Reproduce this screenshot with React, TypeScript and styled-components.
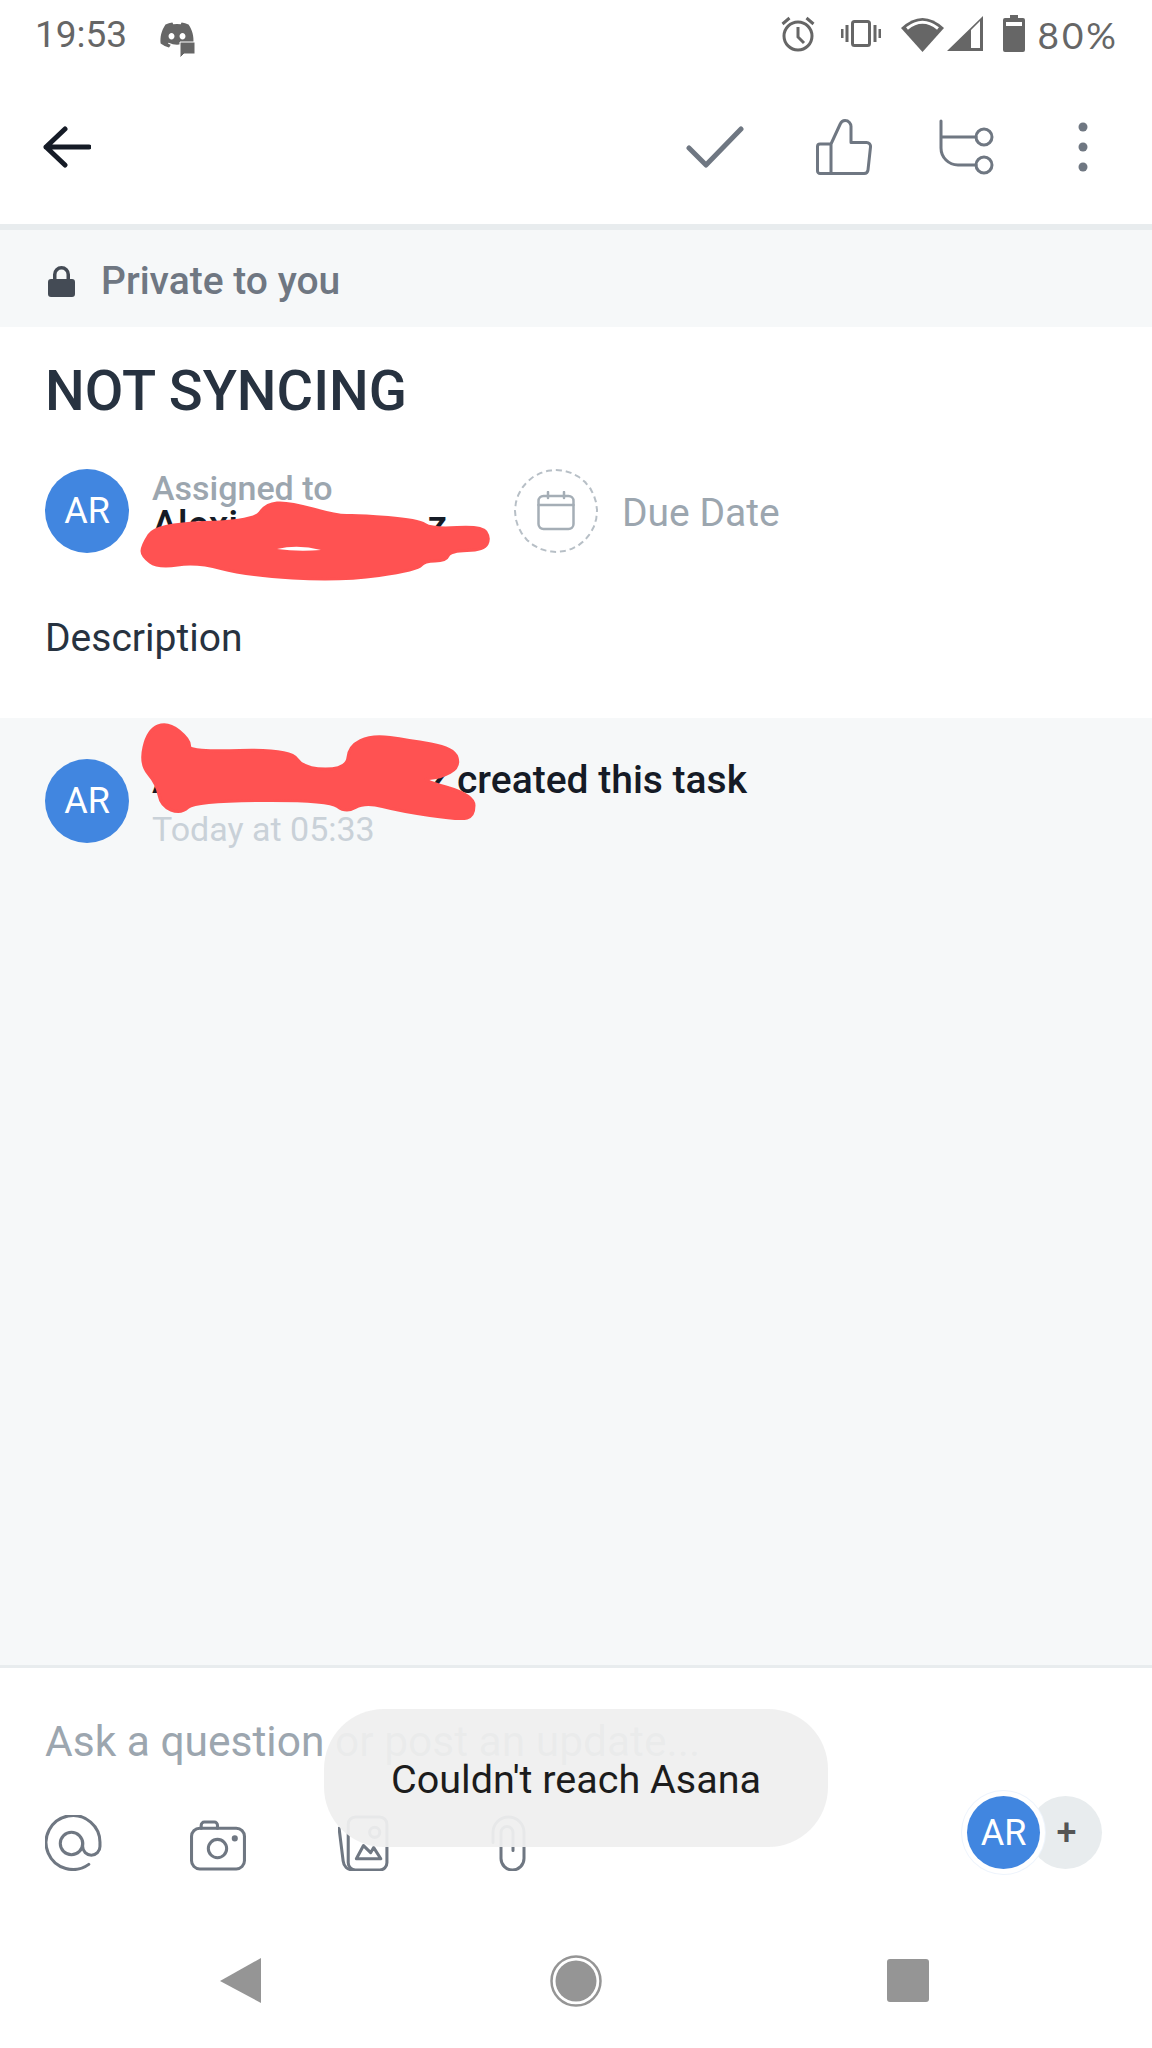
import styled, { createGlobalStyle } from "styled-components";
import { FaDiscord } from "react-icons/fa";

const GlobalStyle = createGlobalStyle`
  html, body {
    margin: 0;
    padding: 0;
    background: #fff;
    font-family: Roboto, "Liberation Sans", sans-serif;
  }
`;

const Page = styled.div`
  position: relative;
  display: flex;
  flex-direction: column;
  width: 1152px;
  height: 2048px;
  overflow: hidden;
  background: #fff;
`;

const StatusBar = styled.div`
  display: flex;
  align-items: center;
  justify-content: space-between;
  height: 70px;
  padding: 0 33px 0 35px;
  color: #666;
`;

const StatusSide = styled.div`
  display: flex;
  align-items: center;
`;

const IconCluster = styled.div`
  display: flex;
  align-items: center;
  margin-bottom: 3px;
`;

const Clock = styled.span`
  font-size: 37px;
  line-height: 70px;
`;

const AppNotice = styled.span`
  position: relative;
  display: flex;
  margin-left: 32px;
  font-size: 36px;
  color: #666;
`;

const NoticeBubble = styled.svg`
  position: absolute;
  right: -1px;
  bottom: -5px;
  width: 17px;
  height: 17px;
`;

const Glyph = styled.svg<{ $gap?: number }>`
  display: block;
  flex: none;
  margin-left: ${(p) => p.$gap ?? 0}px;
`;

const BatteryLevel = styled.span`
  margin-left: 12px;
  font-family: Lato, sans-serif;
  font-size: 37px;
  letter-spacing: 3px;
  line-height: 70px;
`;

const Toolbar = styled.div`
  display: flex;
  align-items: center;
  height: 154px;
  padding: 0 64px 0 43px;
`;

const ToolGroup = styled.div`
  display: flex;
  align-items: center;
  margin-left: auto;
`;

const PrivateBanner = styled.div`
  display: flex;
  align-items: center;
  gap: 26px;
  height: 103px;
  padding: 5px 0 0 48px;
  box-sizing: border-box;
  border-top: 6px solid #e8ecee;
  background: #f6f8f9;
  color: #6f7782;
  font-size: 39px;
  font-weight: 500;
`;

const Details = styled.section`
  display: flex;
  flex-direction: column;
  padding: 34px 45px 57px;
`;

const Title = styled.h1`
  margin: 0;
  color: #273240;
  font-size: 56px;
  font-weight: 500;
  line-height: 60px;
`;

const MetaRow = styled.div`
  display: flex;
  align-items: center;
  margin-top: 48px;
`;

const Avatar = styled.div`
  display: flex;
  flex: none;
  align-items: center;
  justify-content: center;
  width: 84px;
  height: 84px;
  border-radius: 50%;
  background: #4186e0;
  color: #fff;
  font-size: 36px;
`;

const Assignee = styled.div`
  width: 362px;
  margin-left: 23px;
  align-self: flex-start;
  white-space: nowrap;
`;

const AssignedLabel = styled.div`
  color: #9ca6af;
  font-size: 34px;
  font-weight: 500;
  line-height: 38px;
`;

const PersonName = styled.span`
  display: inline-flex;
  justify-content: space-between;
  width: 295px;
  color: #151b26;
  font-weight: 500;
`;

const AssigneeLine = styled.div`
  font-size: 39px;
  line-height: 36px;
`;

const DueCircle = styled.div`
  display: flex;
  align-items: center;
  justify-content: center;
  box-sizing: border-box;
  width: 84px;
  height: 84px;
  border: 2px dashed #b7bfc6;
  border-radius: 50%;
`;

const DueLabel = styled.span`
  margin: 4px 0 0 24px;
  color: #9ca6af;
  font-size: 39px;
`;

const Description = styled.div`
  margin-top: 62px;
  color: #273240;
  font-size: 39px;
  line-height: 46px;
`;

const Activity = styled.section`
  display: flex;
  flex: 1;
  align-items: flex-start;
  gap: 23px;
  padding: 41px 45px 0;
  background: #f6f8f9;
  border-bottom: 3px solid #e8ecee;
`;

const ActivityText = styled.div`
  margin-top: -1px;
  white-space: nowrap;
`;

const ActivityLine = styled.div`
  display: flex;
  gap: 10px;
  color: #151b26;
  font-size: 39px;
  font-weight: 500;
  line-height: 44px;
`;

const ActivityTime = styled.div`
  margin-top: 7px;
  color: #c9d1d8;
  font-size: 34px;
  line-height: 40px;
`;

const Composer = styled.section`
  display: flex;
  flex-direction: column;
  height: 257px;
  box-sizing: border-box;
  padding-top: 49px;
`;

const Placeholder = styled.div`
  padding-left: 45px;
  color: #9ca6af;
  font-size: 42.500px;
  line-height: 50px;
`;

const ComposerActions = styled.div`
  display: flex;
  align-items: flex-end;
  justify-content: space-between;
  height: 73px;
  margin-top: 29px;
  padding: 0 50px 0 1px;
`;

const ActionIcons = styled.div`
  display: flex;
  align-items: flex-end;
`;

const ActionSlot = styled.div`
  display: flex;
  justify-content: center;
  width: 145px;
  margin-bottom: -2px;
`;

const Collaborators = styled.div`
  display: flex;
  align-items: center;
`;

const SmallAvatar = styled.div`
  position: relative;
  z-index: 1;
  display: flex;
  align-items: center;
  justify-content: center;
  box-sizing: border-box;
  width: 73px;
  height: 73px;
  border-radius: 50%;
  background: #4186e0;
  box-shadow: 0 0 0 5px #fff, 0 0 0 6px #eef4fc;
  color: #fff;
  font-size: 36px;
`;

const AddCollaborator = styled.div`
  display: flex;
  align-items: center;
  justify-content: center;
  width: 73px;
  height: 73px;
  margin-left: -11px;
  padding-left: 2px;
  box-sizing: border-box;
  border-radius: 50%;
  background: #e8ecee;
  color: #555;
  font-size: 36px;
  font-weight: 500;
`;

const NavBar = styled.nav`
  display: grid;
  grid-template-columns: repeat(3, 332px);
  justify-content: center;
  justify-items: center;
  align-items: center;
  height: 123px;
  padding-bottom: 12px;
  box-sizing: border-box;
`;

const Toast = styled.div`
  position: absolute;
  left: 324px;
  bottom: 201px;
  display: flex;
  align-items: center;
  justify-content: center;
  width: 504px;
  height: 138px;
  padding-top: 3px;
  box-sizing: border-box;
  border-radius: 60px;
  background: rgba(239, 239, 239, 0.94);
  color: #1c1c1c;
  font-size: 39.500px;
`;

const Scribbles = styled.svg`
  position: absolute;
  top: 0;
  left: 0;
  pointer-events: none;
`;

const iconStroke = {
  fill: "none",
  stroke: "#6f7782",
  strokeWidth: 3,
  strokeLinecap: "round" as const,
  strokeLinejoin: "round" as const,
};

// rounds a traced outline by curving through the midpoints of its sides
const smoothOutline = (points: number[][]) => {
  const mid = (a: number[], b: number[]) => [(a[0] + b[0]) / 2, (a[1] + b[1]) / 2];
  const start = mid(points[points.length - 1], points[0]);
  const curves = points.map((p, i) => {
    const m = mid(p, points[(i + 1) % points.length]);
    return `Q${p[0]} ${p[1]} ${m[0]} ${m[1]}`;
  });
  return `M${start[0]} ${start[1]}${curves.join("")}Z`;
};

const assigneeScribble = [
  [142, 546], [156, 524], [254, 521], [266, 504], [288, 502], [338, 516], [358, 515], [418, 520],
  [432, 529], [482, 526], [490, 538], [484, 550], [450, 551], [446, 561], [424, 561], [418, 570],
  [340, 581], [245, 575], [197, 562], [158, 568], [142, 556],
];

const creatorScribble = [
  [168, 722], [190, 740], [189, 752], [290, 749], [304, 769], [347, 769], [349, 746], [372, 735],
  [408, 740], [454, 748], [460, 767], [440, 778], [418, 779], [474, 795], [474, 816], [460, 820],
  [400, 811], [365, 802], [346, 813], [329, 800], [195, 801], [181, 814], [161, 806], [157, 784],
  [140, 764], [148, 730],
];

const App = () => {
  return (
    <Page>
      <GlobalStyle />
      <StatusBar>
        <StatusSide>
          <Clock>19:53</Clock>
          <AppNotice>
            <FaDiscord />
            <NoticeBubble viewBox="0 0 17 17">
              <path d="M1 1h15v12H5l-4 4z" fill="#666" stroke="#fff" strokeWidth="1" />
            </NoticeBubble>
          </AppNotice>
        </StatusSide>
        <StatusSide>
          <IconCluster>
            <Glyph width="34" height="37" viewBox="0 0 34 37" fill="none" stroke="#666" strokeWidth="3">
              <circle cx="17" cy="21" r="14" />
              <path d="M17 12v10l6 6M1.500 9l7-6M32.500 9l-7-6" />
            </Glyph>
            <Glyph $gap={26} width="40" height="27" viewBox="0 0 40 27" fill="none" stroke="#666" strokeWidth="3">
              <rect x="11.500" y="1.500" width="17" height="24" rx="2" />
              <path d="M6 5v17M1 9v9M34 5v17M39 9v9" />
            </Glyph>
            <Glyph $gap={20} width="43" height="36" viewBox="0 0 43 36">
              <path d="M21.500 36 0 12Q21.500-8 43 12z" fill="#666" />
              <path d="M6 12.500Q21.500 0 37 12.500" fill="none" stroke="#fff" strokeWidth="3" />
            </Glyph>
            <Glyph $gap={3} width="36" height="35" viewBox="0 0 36 35">
              <path fillRule="evenodd" d="M36 0v35H0zM24 14v18h9V5z" fill="#666" />
            </Glyph>
            <Glyph $gap={20} width="22" height="37" viewBox="0 0 22 37">
              <path fillRule="evenodd" d="M7 0h8v3h5a2 2 0 0 1 2 2v30a2 2 0 0 1-2 2H2a2 2 0 0 1-2-2V5a2 2 0 0 1 2-2h5zM3 7v4h16V7z" fill="#666" />
            </Glyph>
          </IconCluster>
          <BatteryLevel>80%</BatteryLevel>
        </StatusSide>
      </StatusBar>

      <Toolbar>
        <Glyph width="48" height="42" viewBox="0 0 48 42" fill="none" stroke="#151b26" strokeWidth="5" strokeLinecap="round" strokeLinejoin="round">
          <path d="M3 21h43M22 3 3 21l19 18" />
        </Glyph>
        <ToolGroup>
          <Glyph width="58" height="42" viewBox="0 0 58 42" fill="none" stroke="#6f7782" strokeWidth="5" strokeLinecap="round" strokeLinejoin="round">
            <path d="M3 22l17 17L55 3" />
          </Glyph>
          <Glyph $gap={72} width="56" height="56" viewBox="0 0 56 56" {...iconStroke}>
            <path d="M15 25H4a2.500 2.500 0 0 0-2.500 2.500V52A2.500 2.500 0 0 0 4 54.500h44a4 4 0 0 0 4-3.500l2.500-23a4 4 0 0 0-4-4.500H35V8a6 6 0 0 0-6-6.500c-2.500 0-4 1.500-5 4L15 25v29.500" />
          </Glyph>
          <Glyph $gap={67} width="56" height="56" viewBox="0 0 56 56" {...iconStroke}>
            <path d="M2 2v27a17 17 0 0 0 17 17h18M2 18h35" />
            <circle cx="45" cy="18" r="8" />
            <circle cx="45" cy="46" r="8" />
          </Glyph>
          <Glyph $gap={83} width="10" height="50" viewBox="0 0 10 50" fill="#6f7782">
            <circle cx="5" cy="5" r="4.500" />
            <circle cx="5" cy="25" r="4.500" />
            <circle cx="5" cy="45" r="4.500" />
          </Glyph>
        </ToolGroup>
      </Toolbar>

      <PrivateBanner>
        <Glyph width="27" height="31" viewBox="0 0 27 31">
          <path d="M13.500 0a8.500 8.500 0 0 1 8.500 8.500V13h2a3 3 0 0 1 3 3v12a3 3 0 0 1-3 3H3a3 3 0 0 1-3-3V16a3 3 0 0 1 3-3h2V8.500A8.500 8.500 0 0 1 13.500 0zm0 3.500a5 5 0 0 0-5 5V13h10V8.500a5 5 0 0 0-5-5z" fill="#444b55" />
        </Glyph>
        Private to you
      </PrivateBanner>

      <Details>
        <Title>NOT SYNCING</Title>
        <MetaRow>
          <Avatar>AR</Avatar>
          <Assignee>
            <AssignedLabel>Assigned to</AssignedLabel>
            <AssigneeLine>
              <PersonName>
                <span>Alexi</span>
                <span>z</span>
              </PersonName>
            </AssigneeLine>
          </Assignee>
          <DueCircle>
            <Glyph width="38" height="40" viewBox="0 0 38 40" fill="none" stroke="#a5aeb6" strokeWidth="2.500" strokeLinecap="round">
              <rect x="1.500" y="5" width="35" height="33" rx="5" />
              <path d="M1.500 14h35M11 1v6M27 1v6" />
            </Glyph>
          </DueCircle>
          <DueLabel>Due Date</DueLabel>
        </MetaRow>
        <Description>Description</Description>
      </Details>

      <Activity>
        <Avatar>AR</Avatar>
        <ActivityText>
          <ActivityLine>
            <PersonName>
              <span>A</span>
              <span>z</span>
            </PersonName>
            created this task
          </ActivityLine>
          <ActivityTime>Today at 05:33</ActivityTime>
        </ActivityText>
      </Activity>

      <Composer>
        <Placeholder>Ask a question or post an update...</Placeholder>
        <ComposerActions>
          <ActionIcons>
            <ActionSlot>
              <Glyph width="57" height="56" viewBox="0 0 56 55" {...iconStroke}>
                <circle cx="26" cy="28" r="11" />
                <path d="M37 26v5a8 8 0 0 0 17 0v-3a26.500 26.500 0 1 0-11 20.500" />
              </Glyph>
            </ActionSlot>
            <ActionSlot>
              <Glyph width="57" height="51" viewBox="0 0 56 50" {...iconStroke}>
                <rect x="1.500" y="8" width="52" height="40" rx="8" />
                <path d="M11 8V5a3 3 0 0 1 3-3h10a3 3 0 0 1 3 3v3" />
                <circle cx="27" cy="28" r="9" />
                <circle cx="44" cy="18" r="1.500" />
              </Glyph>
            </ActionSlot>
            <ActionSlot>
              <Glyph width="51" height="56" viewBox="0 0 50 55" {...iconStroke}>
                <rect x="10" y="2" width="38" height="52" rx="7" />
                <path d="M1 13l4 32c.5 5 4 9 10 9" />
                <circle cx="36" cy="17" r="5" />
                <path d="M18 43l7-13 7 7 3-5 7 11z" />
              </Glyph>
            </ActionSlot>
            <ActionSlot>
              <Glyph width="35" height="56" viewBox="0 0 35 55" {...iconStroke}>
                <path d="M2 27V17a15.500 15.500 0 0 1 31 0v26a11.500 11.500 0 0 1-23 0V17a6 6 0 0 1 12 0v18" />
              </Glyph>
            </ActionSlot>
          </ActionIcons>
          <Collaborators>
            <SmallAvatar>AR</SmallAvatar>
            <AddCollaborator>+</AddCollaborator>
          </Collaborators>
        </ComposerActions>
      </Composer>

      <NavBar>
        <Glyph width="49" height="45" viewBox="0 0 49 45">
          <path d="M41 0v45L0 23z" fill="#959595" />
        </Glyph>
        <Glyph width="52" height="52" viewBox="0 0 52 52">
          <circle cx="26" cy="26" r="24.500" fill="none" stroke="#959595" strokeWidth="2.500" />
          <circle cx="26" cy="26" r="20.500" fill="#959595" />
        </Glyph>
        <Glyph width="42" height="43" viewBox="0 0 42 43">
          <rect width="42" height="43" rx="3" fill="#959595" />
        </Glyph>
      </NavBar>

      <Toast>Couldn&apos;t reach Asana</Toast>

      <Scribbles width="1152" height="2048" viewBox="0 0 1152 2048" fill="#ff5252" stroke="#ff5252" strokeWidth="3" strokeLinejoin="round">
        <path d={smoothOutline(assigneeScribble)} />
        <path d={smoothOutline(creatorScribble)} />
        <path d="M277 549Q298 544 321 550Q298 552 277 549z" fill="#fff" stroke="none" />
      </Scribbles>
    </Page>
  );
};

export default App;
